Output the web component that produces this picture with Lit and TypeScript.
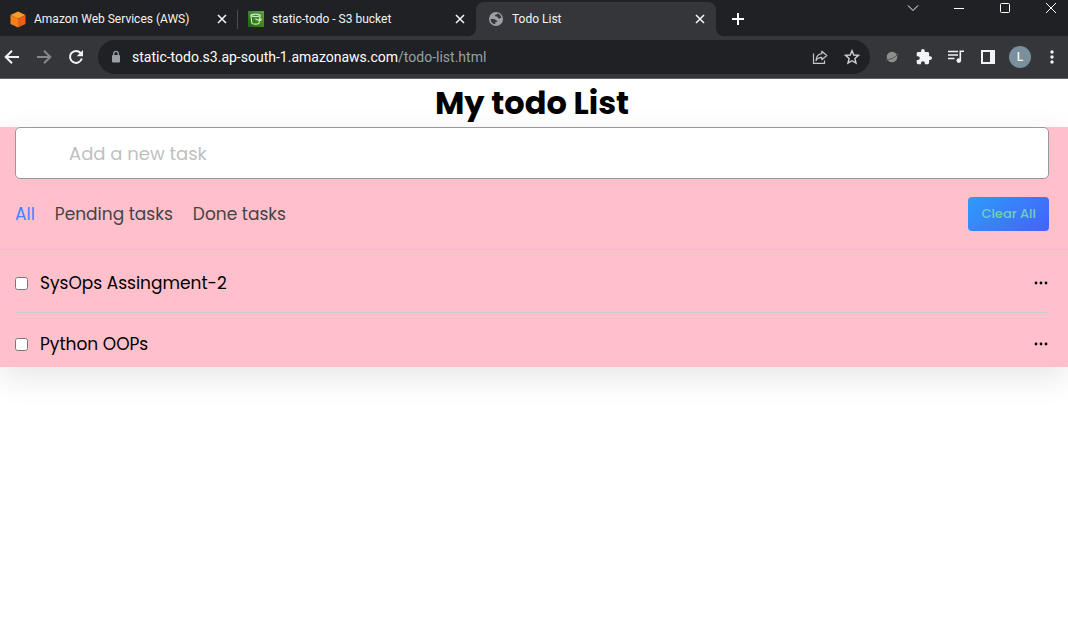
import { LitElement, html, css, svg } from "lit";
import { customElement, property, state } from "lit/decorators.js";
import { classMap } from "lit/directives/class-map.js";

const cross = html`<svg width="10" height="10" viewBox="0 0 10 10" aria-hidden="true">
  <path d="M1 1l8 8M9 1l-8 8" stroke="currentColor" stroke-width="1.6" fill="none" />
</svg>`;

const cubeIcon = html`<svg width="16" height="17" viewBox="0 0 16 17" aria-hidden="true">
  <path d="M8 .5l7.5 3.6L8 7.8.5 4.1z" fill="#fa9a2a" />
  <path d="M.5 4.1L8 7.8v8.8L.5 13z" fill="#f67f1c" />
  <path d="M15.500 4.1L8 7.8v8.8l7.500-3.600z" fill="#e95f1a" />
</svg>`;

const bucketIcon = html`<svg width="16" height="16" viewBox="0 0 16 16" aria-hidden="true">
  <defs>
    <linearGradient id="leaf" x1="0" y1="1" x2="1" y2="0">
      <stop offset="0" stop-color="#1b660f" />
      <stop offset="1" stop-color="#5fa62f" />
    </linearGradient>
  </defs>
  <rect width="16" height="16" fill="url(#leaf)" />
  <g fill="none" stroke="#d3e9c8" stroke-width="1.100">
    <ellipse cx="7.500" cy="4.300" rx="4.600" ry="1.200" />
    <path d="M2.900 4.500l1 7.500c.3 1.500 6.900 1.500 7.200 0l1-7.500" />
    <path d="M7.200 7.600c1.800 1.300 5.400 2.300 6 1.400.3-.6-.5-1.200-1.300-1.600" />
  </g>
</svg>`;

const globeIcon = html`<svg width="16" height="16" viewBox="0 0 16 16" aria-hidden="true">
  <circle cx="8" cy="8" r="7" fill="#9aa0a6" />
  <path d="M2.600 8h3.200c1.200 0 1.800.5 1.900 1.500h1.500c.3.900-.2 1.600-1.900 1.700v1.900C4.600 13 2.500 10.900 2.600 8z" fill="#35363a" />
  <path d="M9.400 2.600c-.2 1.200-2.300.8-2.400 2 0 .9.900 1 1.700 1 1.300.1 1 1.900 2.300 2 .9.100 1.200-.7 2.400-.5C13.100 4.800 11.700 3.100 9.400 2.600z" fill="#35363a" />
</svg>`;

const backIcon = html`<svg width="16" height="16" viewBox="0 0 16 16" aria-hidden="true">
  <path d="M15 8H2M8 1.700L1.700 8 8 14.300" fill="none" stroke="#f1f3f4" stroke-width="2" />
</svg>`;

const forwardIcon = html`<svg width="16" height="16" viewBox="0 0 16 16" aria-hidden="true">
  <path d="M1 8h13M8 1.700L14.300 8 8 14.300" fill="none" stroke="#87888b" stroke-width="2" />
</svg>`;

const reloadIcon = html`<svg width="16" height="16" viewBox="0 0 16 16" aria-hidden="true">
  <path d="M13.800 9.500A6 6 0 1 1 12.600 4" fill="none" stroke="#f1f3f4" stroke-width="2" />
  <path d="M15 .9v6.300H8.700z" fill="#f1f3f4" />
</svg>`;

const lockIcon = html`<svg width="10" height="14" viewBox="0 0 10 14" aria-hidden="true">
  <rect x="1" y="5" width="8" height="7.500" rx="1" fill="#9aa0a6" />
  <path d="M2.700 5.500V3.700a2.300 2.300 0 0 1 4.600 0v1.800" fill="none" stroke="#9aa0a6" stroke-width="1.300" />
</svg>`;

const shareIcon = html`<svg width="16" height="16" viewBox="0 0 16 16" aria-hidden="true">
  <g fill="none" stroke="#c4c7ca" stroke-width="1.200">
    <path d="M1.500 4.500v9.900h11V11.500" />
    <path d="M9.800 2.300l5 4.200-5 4.200V8.400C7 8.400 5.200 9.400 4 11.600 4.300 7.700 6.300 5.100 9.800 4.700z" stroke-linejoin="round" />
  </g>
</svg>`;

const starIcon = html`<svg width="16" height="16" viewBox="0 0 16 16" aria-hidden="true">
  <path d="M8 1.700l1.800 4.300 4.700.4-3.600 3.100 1.100 4.600L8 11.700 4 14.100l1.100-4.600L1.500 6.400 6.200 6z" fill="none" stroke="#d0d3d6" stroke-width="1.400" />
</svg>`;

const planetIcon = html`<svg width="16" height="16" viewBox="0 0 16 16" aria-hidden="true">
  <circle cx="8" cy="8" r="5.300" fill="#8e8e8c" />
  <path d="M3.200 10.500C6.500 10.600 10.500 8.700 13 6" fill="none" stroke="#55565a" stroke-width="1" />
  <path d="M2.700 10.200c-1.200 1.300-1.300 2-.3 1.900M13 5.300c1.100-.5 1.700-.4 1.500.2" fill="none" stroke="#626366" stroke-width=".8" />
</svg>`;

const puzzleIcon = html`<svg width="16" height="16" viewBox="1 1 22 22" aria-hidden="true">
  <path d="M20.500 11H19V7c0-1.100-.9-2-2-2h-4V3.500a2.500 2.500 0 0 0-5 0V5H4c-1.100 0-2 .9-2 2v3.800h1.500a2.700 2.700 0 0 1 0 5.400H2V20c0 1.100.9 2 2 2h3.800v-1.500a2.700 2.700 0 0 1 5.400 0V22H17c1.100 0 2-.9 2-2v-4h1.500a2.500 2.500 0 0 0 0-5z" fill="#f1f3f4" />
</svg>`;

const playlistIcon = html`<svg width="18" height="16" viewBox="0 0 18 16" aria-hidden="true">
  <path d="M1 2.500h10M1 6h10M1 9.500h6.500" stroke="#f1f3f4" stroke-width="1.500" />
  <path d="M13.300 11.500V2.300H17" fill="none" stroke="#f1f3f4" stroke-width="1.600" />
  <circle cx="11.800" cy="11.600" r="2.300" fill="#f1f3f4" />
</svg>`;

const panelIcon = html`<svg width="14" height="14" viewBox="0 0 14 14" aria-hidden="true">
  <path fill-rule="evenodd" d="M0 0h14v14H0zM2 2v10h7V2z" fill="#f1f3f4" />
</svg>`;

const kebabIcon = html`<svg width="4" height="14" viewBox="0 0 4 14" aria-hidden="true">
  <g fill="#f1f3f4"><circle cx="2" cy="2" r="1.700" /><circle cx="2" cy="7" r="1.700" /><circle cx="2" cy="12" r="1.700" /></g>
</svg>`;

const windowGlyphs = [
  { name: "Search tabs", shape: svg`<path d="M1 3.500l5 5 5-5" />` },
  { name: "Minimize", shape: svg`<path d="M1 6.500h10" />` },
  { name: "Maximize", shape: svg`<rect x="1.500" y="1.500" width="9" height="9" rx="1" />` },
  { name: "Close window", shape: svg`<path d="M1 1l10 10M11 1L1 11" />` },
];

const resetButton = css`
  *, *::before, *::after { box-sizing: border-box; }
  button {
    display: inline-flex;
    align-items: center;
    justify-content: center;
    margin: 0;
    padding: 0;
    border: 0;
    background: none;
    color: inherit;
    font: inherit;
    cursor: pointer;
  }
  svg { display: block; flex: none; }
`;

@customElement("browser-frame")
export class BrowserFrame extends LitElement {
  private tabs = [
    { title: "Amazon Web Services (AWS)", icon: cubeIcon, active: false },
    { title: "static-todo - S3 bucket", icon: bucketIcon, active: false },
    { title: "Todo List", icon: globeIcon, active: true },
  ];

  static styles = [
    resetButton,
    css`
      :host {
        display: block;
        background: #35363a;
        border-bottom: 1px solid #5f6064;
        color: #f1f3f4;
        font-family: "Segoe UI", Roboto, "Open Sans", sans-serif;
        font-size: 12px;
      }
      .strip { display: flex; height: 36px; background: #202124; }
      .tab {
        position: relative;
        display: flex;
        align-items: center;
        flex: 0 1 238px;
        min-width: 0;
        gap: 8px;
        height: 34px;
        margin-top: 2px;
        padding: 0 11px 0 10px;
      }
      .tab:first-child::after {
        content: "";
        position: absolute;
        right: 0;
        top: 8px;
        width: 1px;
        height: 19px;
        background: #4b4c50;
      }
      .tab.active {
        flex-basis: 240px;
        padding-left: 12px;
        background: #35363a;
        border-radius: 8px 8px 0 0;
      }
      .tab.active::before, .tab.active::after {
        content: "";
        position: absolute;
        bottom: 0;
        width: 8px;
        height: 8px;
      }
      .tab.active::before { right: 100%; background: radial-gradient(circle at 0 0, #202124 8px, #35363a 8px); }
      .tab.active::after { left: 100%; background: radial-gradient(circle at 100% 0, #202124 8px, #35363a 8px); }
      .title { flex: 1; overflow: hidden; white-space: nowrap; line-height: 18px; }
      .new { width: 44px; height: 38px; }
      .controls { display: flex; margin-left: auto; height: 16px; }
      .controls button { width: 46px; }
      .controls button:last-child { width: 40px; padding-left: 6px; }
      .toolbar { display: flex; align-items: center; height: 42px; padding: 0 12px 0 4px; }
      .nav { display: flex; gap: 16px; margin-right: 14px; }
      .address {
        display: flex;
        align-items: center;
        flex: 1;
        min-width: 0;
        height: 34px;
        padding: 0 10px 0 13px;
        border-radius: 17px;
        background: #202124;
      }
      .url { flex: 1; overflow: hidden; margin-left: 11px; white-space: nowrap; font-size: 14px; line-height: 20px; color: #9aa0a6; }
      .host { color: #fff; }
      .marks { display: flex; gap: 16px; }
      .tools { display: flex; align-items: center; margin-left: 6px; }
      .tools button { width: 32px; }
      .avatar { width: 22px; height: 22px; border-radius: 50%; background: #78909c; line-height: 22px; text-align: center; font-weight: 500; }
      .tools .more { width: 24px; margin-left: 4px; margin-right: -8px; }
    `,
  ];

  render() {
    return html`
      <div class="strip">
        ${this.tabs.map(
          (tab) => html`<div class=${classMap({ tab: true, active: tab.active })}>
            ${tab.icon}<span class="title">${tab.title}</span>
            <button aria-label="Close tab">${cross}</button>
          </div>`
        )}
        <button class="new" aria-label="New tab">
          <svg width="12" height="12" viewBox="0 0 12 12"><path d="M6 0v12M0 6h12" stroke="#fff" stroke-width="2" /></svg>
        </button>
        <div class="controls">
          ${windowGlyphs.map(
            (glyph) => html`<button aria-label=${glyph.name}>
              <svg width="12" height="12" viewBox="0 0 12 12" fill="none" stroke="#fff">${glyph.shape}</svg>
            </button>`
          )}
        </div>
      </div>
      <div class="toolbar">
        <div class="nav">
          <button aria-label="Back">${backIcon}</button>
          <button aria-label="Forward">${forwardIcon}</button>
          <button aria-label="Reload">${reloadIcon}</button>
        </div>
        <div class="address">
          ${lockIcon}
          <div class="url"><span class="host">static-todo.s3.ap-south-1.amazonaws.com</span>/todo-list.html</div>
          <div class="marks">
            <button aria-label="Share">${shareIcon}</button>
            <button aria-label="Bookmark">${starIcon}</button>
          </div>
        </div>
        <div class="tools">
          <button aria-label="Planet extension">${planetIcon}</button>
          <button aria-label="Extensions">${puzzleIcon}</button>
          <button aria-label="Media">${playlistIcon}</button>
          <button aria-label="Side panel">${panelIcon}</button>
          <button aria-label="Profile"><span class="avatar">L</span></button>
          <button class="more" aria-label="Menu">${kebabIcon}</button>
        </div>
      </div>
    `;
  }
}

interface Task {
  name: string;
  done: boolean;
}

@customElement("todo-item")
export class TodoItem extends LitElement {
  @property({ attribute: false }) task: Task = { name: "", done: false };

  static styles = [
    resetButton,
    css`
      :host { display: flex; align-items: center; justify-content: space-between; }
      label { display: flex; align-items: center; gap: 12px; line-height: 26px; cursor: pointer; }
      input { width: 13px; height: 13px; margin: 0; }
      .menu { width: 16px; height: 26px; padding-bottom: 1px; }
    `,
  ];

  render() {
    return html`
      <label><input type="checkbox" .checked=${this.task.done} /><span>${this.task.name}</span></label>
      <button class="menu" aria-label="Task options">
        <svg width="14" height="4" viewBox="0 0 14 4">
          <circle cx="2" cy="2" r="1.400" /><circle cx="7" cy="2" r="1.400" /><circle cx="12" cy="2" r="1.400" />
        </svg>
      </button>
    `;
  }
}

@customElement("app-root")
export class AppRoot extends LitElement {
  @state() private filter = "All";
  @state() private tasks: Task[] = [
    { name: "SysOps Assingment-2", done: false },
    { name: "Python OOPs", done: false },
  ];

  static styles = [
    resetButton,
    css`
      :host {
        display: block;
        min-height: 100vh;
        overflow: hidden;
        background: #fff;
        color: #000;
        font-family: Poppins, Inter, "Open Sans", sans-serif;
        font-size: 17px;
      }
      h1 { margin: 0; padding-right: 4px; font-size: 32px; line-height: 48px; font-weight: 700; text-align: center; }
      .panel { background: #ffc0cb; box-shadow: 0 10px 30px rgba(0, 0, 0, 0.1); }
      .entry, .filters { padding: 0 19px 0 15px; }
      .entry input {
        display: block;
        width: 100%;
        height: 52px;
        padding: 0 20px 0 53px;
        border: 1px solid #999;
        border-radius: 5px;
        background: #fff;
        font: inherit;
        font-size: 18px;
        outline: 0;
      }
      .entry input::placeholder { color: #bfbfbf; opacity: 1; }
      .filters {
        display: flex;
        align-items: center;
        justify-content: space-between;
        padding-top: 18px;
        padding-bottom: 18px;
        border-bottom: 1px solid #ccc;
      }
      .choices { display: flex; gap: 20px; }
      .choices button { color: #444; line-height: 26px; }
      .choices button.active { color: #3c87ff; }
      .filters .clear {
        height: 34px;
        padding: 0 13px;
        border-radius: 4px;
        background: linear-gradient(135deg, #2f9bf8, #4462fb);
        color: #6fceb8;
        font-size: 13px;
        font-weight: 500;
      }
      ul { list-style: none; margin: 0; padding: 20px 19px 10px 15px; }
      li + li { margin-top: 16px; padding-top: 18px; border-top: 1px solid #ccc; }
    `,
  ];

  render() {
    const shown = this.tasks.filter(
      (task) => this.filter === "All" || task.done === (this.filter === "Done tasks")
    );
    return html`
      <browser-frame></browser-frame>
      <main>
        <h1>My todo List</h1>
        <section class="panel">
          <div class="entry"><input type="text" placeholder="Add a new task" aria-label="Add a new task" /></div>
          <div class="filters">
            <div class="choices">
              ${["All", "Pending tasks", "Done tasks"].map(
                (name) => html`<button
                  class=${classMap({ active: this.filter === name })}
                  @click=${() => (this.filter = name)}
                >${name}</button>`
              )}
            </div>
            <button class="clear" @click=${() => (this.tasks = [])}>Clear All</button>
          </div>
          <ul>
            ${shown.map((task) => html`<li><todo-item .task=${task}></todo-item></li>`)}
          </ul>
        </section>
      </main>
    `;
  }
}
